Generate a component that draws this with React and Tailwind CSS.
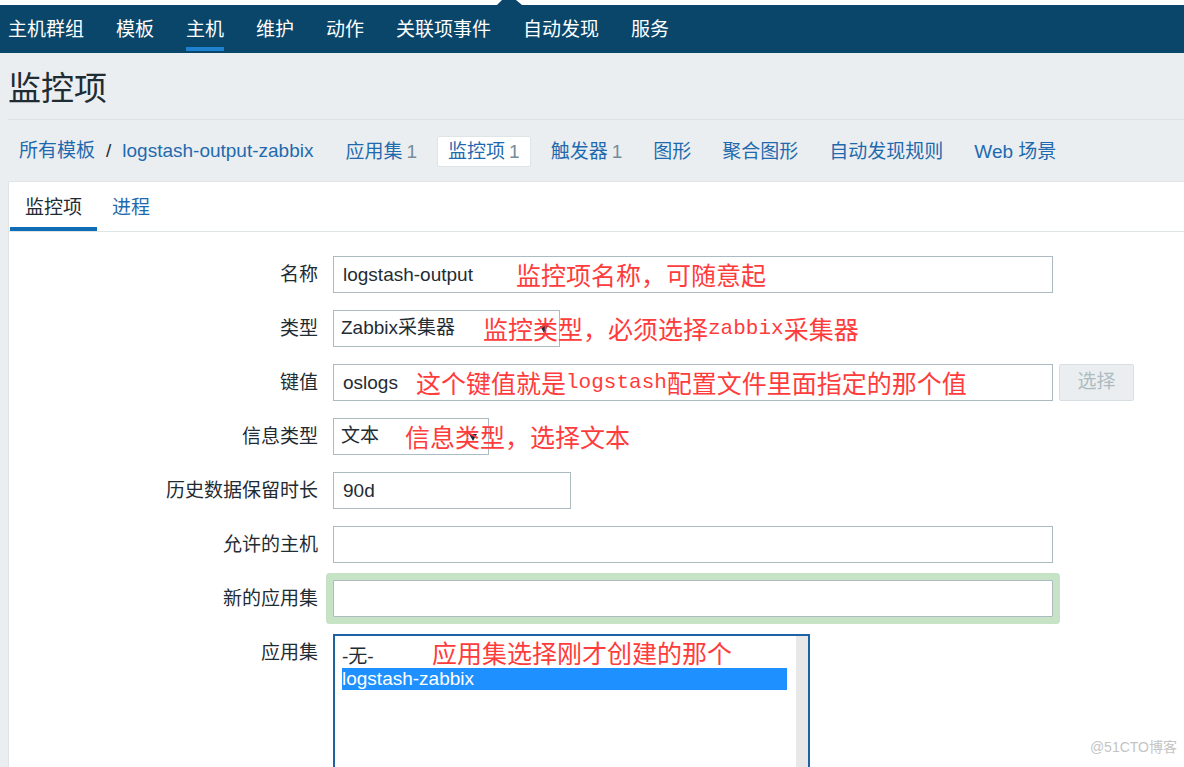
const navItems = ['主机群组', '模板', '主机', '维护', '动作', '关联项事件', '自动发现', '服务']

const subTabs = [
  { label: '应用集', count: 1 },
  { label: '监控项', count: 1, active: true },
  { label: '触发器', count: 1 },
  { label: '图形' },
  { label: '聚合图形' },
  { label: '自动发现规则' },
  { label: 'Web 场景' },
]

function Note({ left, children }) {
  return (
    <div
      className="absolute top-0 h-[37px] flex items-center whitespace-nowrap pointer-events-none font-['Noto_Sans_CJK_SC',sans-serif] text-[25px] text-[#ff3c3c] leading-none"
      style={{ left }}
    >
      {children}
    </div>
  )
}

function Latin({ children }) {
  return <span className="font-['Liberation_Mono',monospace] text-[21px]">{children}</span>
}

function Row({ label, children }) {
  return (
    <div className="flex items-start">
      <div className="w-[309px] shrink-0 h-[37px] leading-[37px] text-right">{label}</div>
      <div className="ml-[15px] relative flex">{children}</div>
    </div>
  )
}

function TextBox({ width, value = '', className = '' }) {
  return (
    <input
      readOnly
      value={value}
      className={'h-[37px] border border-[#acbbc2] bg-white pl-[9px] text-[19px] text-[#1f2c33] outline-none ' + className}
      style={{ width }}
    />
  )
}

function Select({ width, value }) {
  return (
    <div
      className="relative h-[37px] border border-[#acbbc2] bg-white pl-[7px] flex items-center text-[19px]"
      style={{ width }}
    >
      {value}
      <svg className="absolute right-[11px] top-[15px]" width="8" height="7" viewBox="0 0 8 7">
        <polygon points="0,0 8,0 4,7" fill="#1f2c33" />
      </svg>
    </div>
  )
}

export default function App() {
  return (
    <div className="relative w-[1184px] h-[767px] overflow-hidden bg-[#ebeef0] text-[#1f2c33] font-['Liberation_Sans','Noto_Sans_CJK_SC',sans-serif]">
      <div className="relative h-[5px] bg-white">
        <svg className="absolute left-[497px] top-0" width="25" height="5" viewBox="0 0 25 5">
          <polygon points="0,5 5,0 19,0 25,5" fill="#0a466a" />
        </svg>
      </div>
      <nav className="h-[48px] bg-[#0a466a] flex pl-[8px] gap-[32px] text-[19px] text-white">
        {navItems.map((item, i) => (
          <div key={item} className="relative flex items-center pt-[3px]">
            {item}
            {i === 2 && <div className="absolute left-0 right-0 bottom-[2px] h-[4px] bg-[#1f80cf]" />}
          </div>
        ))}
      </nav>

      <div className="ml-[8px] h-[67px] border-b border-[#dde2e6] flex items-center pt-[5px] text-[33px] text-[#1f2c33]">
        监控项
      </div>

      <div className="h-[61px] flex items-center pl-[19px] pt-[2px] text-[19px] text-[#1f6aae]">
        <span>所有模板</span>
        <span className="mx-[11px] text-[#1f2c33]">/</span>
        <span>logstash-output-zabbix</span>
        <div className="ml-[21px] flex gap-[9px]">
          {subTabs.map(t => (
            <div
              key={t.label}
              className={
                'h-[31px] px-[10px] pt-[2px] flex items-center rounded-[2px] border ' +
                (t.active ? 'bg-white border-[#dfe4e7]' : 'border-transparent')
              }
            >
              {t.label}
              {t.count && <span className="ml-[4px] text-[#768d99]">{t.count}</span>}
            </div>
          ))}
        </div>
      </div>

      <div className="ml-[8px] h-[600px] bg-white border-l border-t border-[#dfe4e7] text-[19px]">
        <div className="h-[50px] flex border-b border-[#dfe4e7] pl-[1px]">
          <div className="relative px-[15px] pt-[3px] flex items-center text-[#1f2c33]">
            监控项
            <div className="absolute left-0 right-0 bottom-0 h-[4px] bg-[#0f6cb5]" />
          </div>
          <div className="px-[15px] pt-[3px] flex items-center text-[#1f6aae]">进程</div>
        </div>

        <div className="pt-[24px] flex flex-col gap-[17px]">
          <Row label="名称">
            <TextBox width={720} value="logstash-output" />
            <Note left={183}>监控项名称，可随意起</Note>
          </Row>
          <Row label="类型">
            <Select width={227} value="Zabbix采集器" />
            <Note left={150}>
              监控类型，必须选择<Latin>zabbix</Latin>采集器
            </Note>
          </Row>
          <Row label="键值">
            <TextBox width={720} value="oslogs" />
            <button className="ml-[6px] w-[75px] h-[37px] rounded-[2px] border border-[#d8dfe3] bg-[#ebeef0] text-[19px] text-[#acbbc2]">
              选择
            </button>
            <Note left={83}>
              这个键值就是<Latin>logstash</Latin>配置文件里面指定的那个值
            </Note>
          </Row>
          <Row label="信息类型">
            <Select width={156} value="文本" />
            <Note left={72}>信息类型，选择文本</Note>
          </Row>
          <Row label="历史数据保留时长">
            <TextBox width={238} value="90d" />
          </Row>
          <Row label="允许的主机">
            <TextBox width={720} />
          </Row>
          <Row label="新的应用集">
            <TextBox width={720} className="shadow-[0_0_0_7px_#c6e3c6] rounded-[1px]" />
          </Row>
          <Row label="应用集">
            <div className="relative w-[477px] h-[170px] border-2 border-[#1d62a3] bg-white pt-[10px] pl-[7px] pr-[21px]">
              <div className="h-[22px] leading-[22px]">-无-</div>
              <div className="h-[22px] leading-[22px] bg-[#1e90ff] text-white">logstash-zabbix</div>
              <div className="absolute right-0 top-0 bottom-0 w-[12px] bg-[#e8e8e8]" />
            </div>
            <Note left={99}>应用集选择刚才创建的那个</Note>
          </Row>
        </div>
      </div>

      <div className="absolute right-[7px] bottom-[9px] text-[14px] text-[#c4c4c4]">@51CTO博客</div>
    </div>
  )
}
